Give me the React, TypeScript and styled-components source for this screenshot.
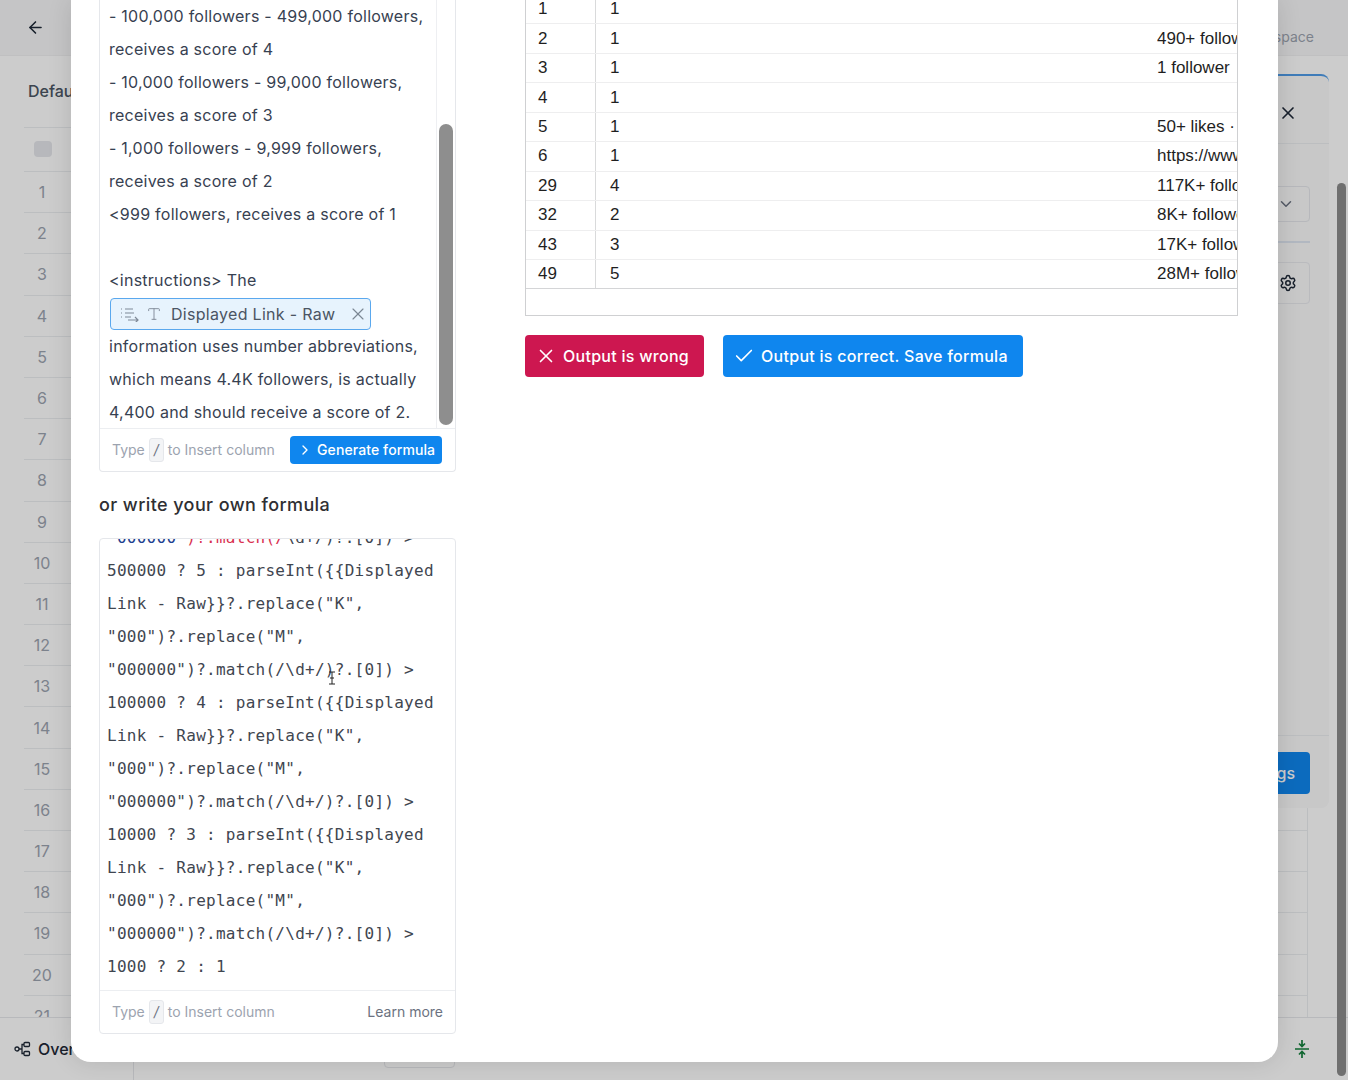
import styled, { createGlobalStyle } from "styled-components";
import { ArrowLeft, Check, ChevronDown, ChevronRight, Settings, Type, X } from "lucide-react";

const promptLines = [
    "- 100,000 followers - 499,000 followers,",
    "receives a score of 4",
    "- 10,000 followers - 99,000 followers,",
    "receives a score of 3",
    "- 1,000 followers - 9,999 followers,",
    "receives a score of 2",
    "<999 followers, receives a score of 1",
    "\u00a0",
    "<instructions> The",
];

const promptEnd = [
    "information uses number abbreviations,",
    "which means 4.4K followers, is actually",
    "4,400 and should receive a score of 2.",
];

const codeLines = [
    '500000 ? 5 : parseInt({{Displayed',
    'Link - Raw}}?.replace("K",',
    '"000")?.replace("M",',
    '"000000")?.match(/\\d+/)?.[0]) >',
    '100000 ? 4 : parseInt({{Displayed',
    'Link - Raw}}?.replace("K",',
    '"000")?.replace("M",',
    '"000000")?.match(/\\d+/)?.[0]) >',
    '10000 ? 3 : parseInt({{Displayed',
    'Link - Raw}}?.replace("K",',
    '"000")?.replace("M",',
    '"000000")?.match(/\\d+/)?.[0]) >',
    '1000 ? 2 : 1',
];

const tableRows = [
    ["1", "1", ""],
    ["2", "1", "490+ followers"],
    ["3", "1", "1 follower"],
    ["4", "1", ""],
    ["5", "1", "50+ likes · 3 comments"],
    ["6", "1", "https://www.instagram.com"],
    ["29", "4", "117K+ followers"],
    ["32", "2", "8K+ followers"],
    ["43", "3", "17K+ followers"],
    ["49", "5", "28M+ followers"],
];

const gridRows = Array.from({ length: 22 }, (_, i) => i + 1);

const App = () => {
    return (
        <Page>
            <GlobalStyle />
            <TopBar>
                <ArrowLeft size={19} color="#1f2937" />
                <Workspace>Workspace</Workspace>
            </TopBar>
            <Content>
                <Title>Default view</Title>
                <HeadRow>
                    <CheckBox />
                </HeadRow>
                <Rows>
                    {gridRows.map((n) => (
                        <GridRow key={n}>
                            <RowNumber>{n}</RowNumber>
                        </GridRow>
                    ))}
                </Rows>
            </Content>
            <BottomBar>
                <OverviewTab>
                    <svg width="17" height="16" viewBox="0 0 17 16" fill="none" stroke="#1f2937" strokeWidth="1.3">
                        <circle cx="3" cy="8" r="2" />
                        <rect x="10" y="1.5" width="5.5" height="4" rx="1" />
                        <rect x="10" y="10.5" width="5.5" height="4" rx="1" />
                        <path d="M5 8h3M8 8V3.5h2M8 8v4.5h2" />
                    </svg>
                    Overview
                </OverviewTab>
                <FooterButton />
                <svg width="16" height="20" viewBox="0 0 16 20" fill="none" stroke="#15803d" strokeWidth="1.7">
                    <path d="M1 10h14M8 1v6M5 4.5 8 7.5 11 4.5M8 19v-6M5 15.5 8 12.5 11 15.5" />
                </svg>
            </BottomBar>

            <SidePanel>
                <PanelHead>
                    <X size={20} color="#1f2937" />
                </PanelHead>
                <PanelBody>
                    <SelectBox>
                        <ChevronDown size={18} color="#6b7280" />
                    </SelectBox>
                    <PanelRule />
                    <GearBox>
                        <Settings size={18} color="#1f2937" />
                    </GearBox>
                </PanelBody>
                <PanelFoot>
                    <SaveButton>Save settings</SaveButton>
                </PanelFoot>
            </SidePanel>

            <Scrim />
            <PageScrollThumb />

            <Modal>
                <LeftColumn>
                    <PromptCard>
                        <EditorRow>
                            <PromptText>
                                {promptLines.map((line, i) => (
                                    <Line key={i}>{line}</Line>
                                ))}
                                <ChipLine>
                                    <Chip>
                                        <svg width="20" height="16" viewBox="0 0 20 16" fill="none" stroke="#7f8997" strokeWidth="1.2">
                                            <path d="M1 3h1M1 7h1M1 11h1M5 3h8M5 7h9M5 11h6M8 14h10M15 11l3 3-3 3" />
                                        </svg>
                                        <ChipType>
                                            <Type size={16} color="#7f8997" strokeWidth={1.4} />
                                        </ChipType>
                                        <ChipLabel>Displayed Link - Raw</ChipLabel>
                                        <X size={20} color="#7b8794" strokeWidth={1.4} />
                                    </Chip>
                                </ChipLine>
                                {promptEnd.map((line) => (
                                    <Line key={line}>{line}</Line>
                                ))}
                            </PromptText>
                            <ScrollGutter>
                                <ScrollThumb />
                            </ScrollGutter>
                        </EditorRow>
                        <CardFooter>
                            <Hint>
                                Type <Kbd>/</Kbd> to Insert column
                            </Hint>
                            <GenerateButton>
                                <ChevronRight size={16} strokeWidth={2} />
                                Generate formula
                            </GenerateButton>
                        </CardFooter>
                    </PromptCard>
                    <Heading>or write your own formula</Heading>
                    <FormulaCard>
                        <CodeArea>
                            <CodeBlock>
                                <CodeLine>
                                    <CodeNumber>"000000</CodeNumber>
                                    <CodeRed>")?.match(/</CodeRed>
                                    {"\\d+/)?.[0]) >"}
                                </CodeLine>
                                {codeLines.map((line, i) => (
                                    <CodeLine key={i}>{line}</CodeLine>
                                ))}
                            </CodeBlock>
                            <TextCursor>
                                <svg width="8" height="14" viewBox="0 0 8 14" fill="none" stroke="#222" strokeWidth="1">
                                    <path d="M1 1h6M4 1v12M1 13h6M2 7h4" />
                                </svg>
                            </TextCursor>
                        </CodeArea>
                        <CardFooter>
                            <Hint>
                                Type <Kbd>/</Kbd> to Insert column
                            </Hint>
                            <LearnMore>Learn more</LearnMore>
                        </CardFooter>
                    </FormulaCard>
                </LeftColumn>
                <RightColumn>
                    <ResultTable>
                        <TableBody>
                            {tableRows.map((row, i) => (
                                <TableRow key={row[0]} $last={i === tableRows.length - 1}>
                                    <IdCell>{row[0]}</IdCell>
                                    <ValueCell>{row[1]}</ValueCell>
                                    <TextCell>{row[2]}</TextCell>
                                </TableRow>
                            ))}
                        </TableBody>
                    </ResultTable>
                    <Actions>
                        <ActionButton $tone="#cd1750">
                            <X size={22} strokeWidth={1.8} />
                            Output is wrong
                        </ActionButton>
                        <ActionButton $tone="#0f86ee">
                            <Check size={22} strokeWidth={1.8} />
                            Output is correct. Save formula
                        </ActionButton>
                    </Actions>
                </RightColumn>
            </Modal>
        </Page>
    );
};

const GlobalStyle = createGlobalStyle`
    body {
        margin: 0;
        font-family: Inter, "Liberation Sans", sans-serif;
    }
    * {
        box-sizing: border-box;
    }
`;

const Page = styled.div`
    position: relative;
    width: 1348px;
    height: 1080px;
    overflow: hidden;
    display: flex;
    flex-direction: column;
    background: #ffffff;
`;

const TopBar = styled.header`
    height: 56px;
    flex-shrink: 0;
    display: flex;
    align-items: center;
    justify-content: space-between;
    padding: 0 34px 0 26px;
    background: #f7f7f8;
    border-bottom: 1px solid #f0f0f2;
`;

const Workspace = styled.span`
    font-size: 14px;
    color: #9ca3af;
    margin-top: 18px;
`;

const Content = styled.main`
    flex: 1;
    min-height: 0;
    display: flex;
    flex-direction: column;
    padding: 0 40px 0 24px;
    overflow: hidden;
`;

const Title = styled.div`
    height: 71px;
    flex-shrink: 0;
    padding: 25px 0 0 4px;
    font-size: 16px;
    font-weight: 500;
    color: #4b5563;
`;

const HeadRow = styled.div`
    height: 45px;
    flex-shrink: 0;
    display: flex;
    align-items: center;
    padding-left: 10px;
    border-top: 1px solid #eceef1;
    border-bottom: 1px solid #eceef1;
`;

const CheckBox = styled.div`
    width: 18px;
    height: 16px;
    margin-top: -2px;
    border-radius: 4px;
    background: #e5e7eb;
`;

const Rows = styled.div`
    flex: 1;
    min-height: 0;
    overflow: hidden;
`;

const GridRow = styled.div`
    height: 41.2px;
    display: flex;
    align-items: center;
    border-bottom: 1px solid #eceef1;
    border-right: 1px solid #eceef1;
`;

const RowNumber = styled.span`
    width: 36px;
    text-align: center;
    font-size: 16px;
    color: #9ca3af;
`;

const BottomBar = styled.footer`
    height: 63px;
    flex-shrink: 0;
    display: flex;
    align-items: center;
    padding-right: 38px;
    border-top: 1px solid #e7e8eb;
`;

const OverviewTab = styled.div`
    width: 134px;
    height: 100%;
    display: flex;
    align-items: center;
    gap: 7px;
    padding-left: 14px;
    font-size: 16px;
    font-weight: 500;
    color: #1f2937;
    border-right: 1px solid #e7e8eb;
`;

const FooterButton = styled.div`
    width: 71px;
    height: 38px;
    margin-left: 250px;
    margin-right: auto;
    border: 1px solid #e7e8eb;
    border-radius: 4px;
`;

const SidePanel = styled.aside`
    position: absolute;
    top: 74px;
    right: 19px;
    width: 400px;
    height: 734px;
    display: flex;
    flex-direction: column;
    background: #fafafb;
    border-top: 2px solid #4f9ce8;
    border-radius: 8px;
`;

const PanelHead = styled.div`
    height: 68px;
    flex-shrink: 0;
    display: flex;
    align-items: center;
    justify-content: flex-end;
    padding: 6px 31px 0 0;
    border-bottom: 1px solid #eceef1;
`;

const PanelBody = styled.div`
    flex: 1;
    padding: 42px 19px 0;
`;

const SelectBox = styled.div`
    height: 36px;
    display: flex;
    align-items: center;
    justify-content: flex-end;
    padding-right: 14px;
    border: 1px solid #e5e7eb;
    border-radius: 4px;
`;

const PanelRule = styled.div`
    height: 2px;
    margin: 19px 0 19px;
    background: #dfe6f2;
`;

const GearBox = styled.div`
    height: 42px;
    display: flex;
    align-items: center;
    justify-content: flex-end;
    padding-right: 12px;
    border: 1px solid #e9eaee;
    border-radius: 4px;
`;

const PanelFoot = styled.div`
    height: 73px;
    flex-shrink: 0;
    display: flex;
    justify-content: flex-end;
    padding: 16px 19px 0 0;
    border-top: 1px solid #eceef1;
`;

const SaveButton = styled.div`
    height: 42px;
    display: flex;
    align-items: center;
    padding: 0 15px;
    border-radius: 4px;
    background: #1086ee;
    color: #ffffff;
    font-size: 16px;
    font-weight: 500;
`;

const Scrim = styled.div`
    position: absolute;
    inset: 0;
    background: rgba(0, 0, 0, 0.2);
`;

const PageScrollThumb = styled.div`
    position: absolute;
    top: 183px;
    right: 2px;
    width: 9px;
    height: 893px;
    border-radius: 5px;
    background: #6f6f6f;
`;

const Modal = styled.section`
    position: absolute;
    top: 0;
    left: 71px;
    width: 1207px;
    height: 1062px;
    display: grid;
    grid-template-columns: 357px 713px;
    column-gap: 69px;
    padding-left: 28px;
    background: #ffffff;
    border-radius: 0 0 20px 20px;
    box-shadow: 0 0 24px rgba(0, 0, 0, 0.12);
`;

const LeftColumn = styled.div`
    display: flex;
    flex-direction: column;
`;

const PromptCard = styled.div`
    height: 472px;
    flex-shrink: 0;
    display: flex;
    flex-direction: column;
    border: 1px solid #e5e7eb;
    border-top: 0;
    border-radius: 0 0 4px 4px;
`;

const EditorRow = styled.div`
    flex: 1;
    min-height: 0;
    display: flex;
`;

const PromptText = styled.div`
    flex: 1;
    min-width: 0;
    overflow: hidden;
    padding-left: 9px;
    border-right: 1px solid #eeeff2;
    font-size: 16px;
    letter-spacing: 0.25px;
    color: #374151;
`;

const Line = styled.div`
    height: 33px;
    line-height: 33px;
    white-space: nowrap;
`;

const ChipLine = styled.div`
    height: 33px;
    display: flex;
    align-items: center;
`;

const Chip = styled.div`
    width: 261px;
    height: 32px;
    margin-left: 1px;
    display: flex;
    align-items: center;
    padding: 0 2px 0 9px;
    background: #e7f3fd;
    border: 1.5px solid #5aa8ee;
    border-radius: 4px;
`;

const ChipType = styled.span`
    display: flex;
    margin-left: 6px;
`;

const ChipLabel = styled.span`
    flex: 1;
    padding-left: 9px;
    color: #4b5563;
    font-size: 16px;
    letter-spacing: 0.3px;
    white-space: nowrap;
`;

const ScrollGutter = styled.div`
    width: 18px;
    flex-shrink: 0;
    padding: 124px 2px 0 2px;
`;

const ScrollThumb = styled.div`
    width: 14px;
    height: 301px;
    border-radius: 7px;
    background: #8e8e8e;
`;

const CardFooter = styled.div`
    height: 43px;
    flex-shrink: 0;
    display: flex;
    align-items: center;
    justify-content: space-between;
    padding: 0 12px;
    border-top: 1px solid #eceef1;
`;

const Hint = styled.div`
    display: flex;
    align-items: center;
    gap: 4px;
    padding-bottom: 1px;
    font-size: 14px;
    color: #9ca3af;
`;

const Kbd = styled.span`
    width: 15px;
    height: 24px;
    display: flex;
    align-items: center;
    justify-content: center;
    color: #6b7280;
    background: #f3f4f6;
    border: 1px solid #e5e7eb;
    border-radius: 3px;
    font-style: italic;
`;

const GenerateButton = styled.div`
    width: 152px;
    height: 28px;
    margin-right: 1px;
    display: flex;
    align-items: center;
    gap: 4px;
    padding: 0 0 1px 7px;
    background: #0f86ee;
    color: #ffffff;
    border-radius: 4px;
    font-size: 14px;
    font-weight: 500;
    letter-spacing: 0.1px;
    white-space: nowrap;
`;

const LearnMore = styled.span`
    padding-bottom: 1px;
    font-size: 14px;
    color: #6b7280;
`;

const Heading = styled.h2`
    height: 66px;
    flex-shrink: 0;
    margin: 0;
    padding-bottom: 2px;
    display: flex;
    align-items: center;
    font-size: 18px;
    font-weight: 500;
    letter-spacing: 0.4px;
    color: #2f2f33;
`;

const FormulaCard = styled.div`
    height: 496px;
    flex-shrink: 0;
    display: flex;
    flex-direction: column;
    border: 1px solid #e5e7eb;
    border-radius: 4px;
    overflow: hidden;
`;

const CodeArea = styled.div`
    position: relative;
    flex: 1;
    min-height: 0;
    overflow: hidden;
`;

const CodeBlock = styled.div`
    margin-top: -18px;
    padding-left: 7px;
    font-family: "DejaVu Sans Mono", "Liberation Mono", monospace;
    font-size: 16px;
    letter-spacing: 0.27px;
    color: #3f4650;
`;

const CodeLine = styled.div`
    height: 33px;
    line-height: 33px;
    white-space: pre;
`;

const CodeNumber = styled.span`
    color: #1d3f8f;
`;

const CodeRed = styled.span`
    color: #d9304f;
`;

const TextCursor = styled.div`
    position: absolute;
    left: 228px;
    top: 132px;
    line-height: 0;
`;

const RightColumn = styled.div`
    display: flex;
    flex-direction: column;
`;

const ResultTable = styled.div`
    height: 316px;
    overflow: hidden;
    border: 1px solid #cfd0d2;
    border-top: 0;
`;

const TableBody = styled.div`
    margin-top: -5px;
`;

const TableRow = styled.div<{ $last: boolean }>`
    height: 29.45px;
    display: grid;
    grid-template-columns: 70px 561px 1fr;
    align-items: center;
    border-bottom: 1px solid ${(p) => (p.$last ? "#d4d5d7" : "#eeeeef")};
    font-family: "Liberation Sans", Arial, sans-serif;
    font-size: 17px;
    color: #1f1f1f;
`;

const IdCell = styled.div`
    height: 100%;
    display: flex;
    align-items: center;
    padding-left: 12px;
    border-right: 1px solid #d9dadb;
`;

const ValueCell = styled.div`
    padding-left: 14px;
`;

const TextCell = styled.div`
    overflow: hidden;
    white-space: nowrap;
`;

const Actions = styled.div`
    display: flex;
    gap: 19px;
    margin-top: 19px;
`;

const ActionButton = styled.div<{ $tone: string }>`
    height: 42px;
    display: flex;
    align-items: center;
    gap: 6px;
    padding: 0 15px 0 10px;
    background: ${(p) => p.$tone};
    color: #ffffff;
    border-radius: 4px;
    font-size: 16px;
    font-weight: 500;
    letter-spacing: 0.28px;
    white-space: nowrap;
`;

export default App;
